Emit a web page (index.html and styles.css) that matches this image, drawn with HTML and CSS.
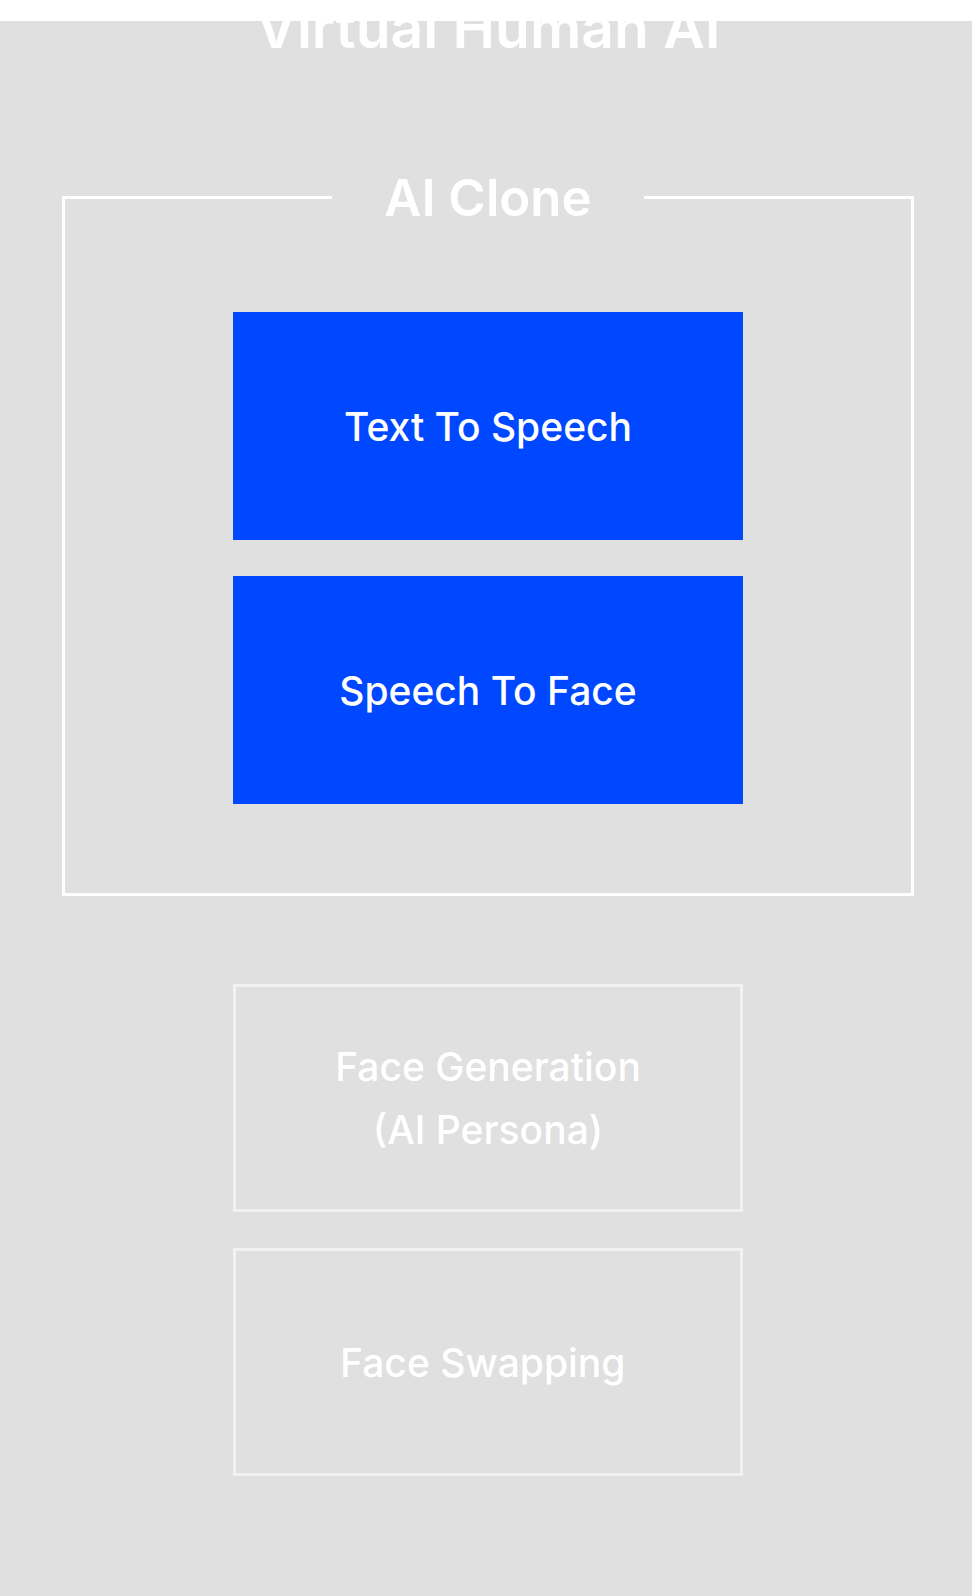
FILE: index.html
```html
<!DOCTYPE html>
<html lang="en">
<head>
<meta charset="utf-8">
<meta name="viewport" content="width=device-width, initial-scale=1">
<title>Virtual Human AI</title>
<link rel="stylesheet" href="styles.css">
</head>
<body>
<main class="panel">
  <h1 class="panel-title">Virtual Human AI</h1>
  <section class="group">
    <h2 class="group-title">AI Clone</h2>
    <div class="cards">
      <div class="card card-filled">Text To Speech</div>
      <div class="card card-filled">Speech To Face</div>
    </div>
  </section>
  <div class="cards">
    <div class="card card-outline">Face Generation<br>(AI Persona)</div>
    <div class="card card-outline">Face Swapping&nbsp;</div>
  </div>
</main>
</body>
</html>
```

FILE: styles.css
```css
* {
  box-sizing: border-box;
}

body {
  margin: 0;
  background: linear-gradient(#fff 21px, #e0e0e0 21px);
  color: #fff;
  font-family: Inter, "Open Sans", sans-serif;
}

.panel {
  min-height: 100vh;
  padding: 0 58px 120px 62px;
}

.panel-title {
  margin: 0 0 140px;
  font-size: 57px;
  font-weight: 600;
  line-height: 56px;
  text-align: center;
}

.group {
  margin-bottom: 88px;
  padding-bottom: 89px;
  border: 3px solid #fff;
}

.group-title {
  width: 312px;
  max-width: 80%;
  margin: -31px auto 84px;
  background: #e0e0e0;
  font-size: 51px;
  font-weight: 600;
  line-height: 60px;
  text-align: center;
}

.cards {
  display: flex;
  flex-direction: column;
  align-items: center;
  gap: 36px;
}

.card {
  display: flex;
  align-items: center;
  justify-content: center;
  width: 510px;
  max-width: 100%;
  min-height: 228px;
  font-size: 39px;
  font-weight: 500;
  line-height: 63px;
  text-align: center;
}

.card-filled {
  background: #0048ff;
}

.card-outline {
  border: 3px solid #f2f2f2;
}
```
